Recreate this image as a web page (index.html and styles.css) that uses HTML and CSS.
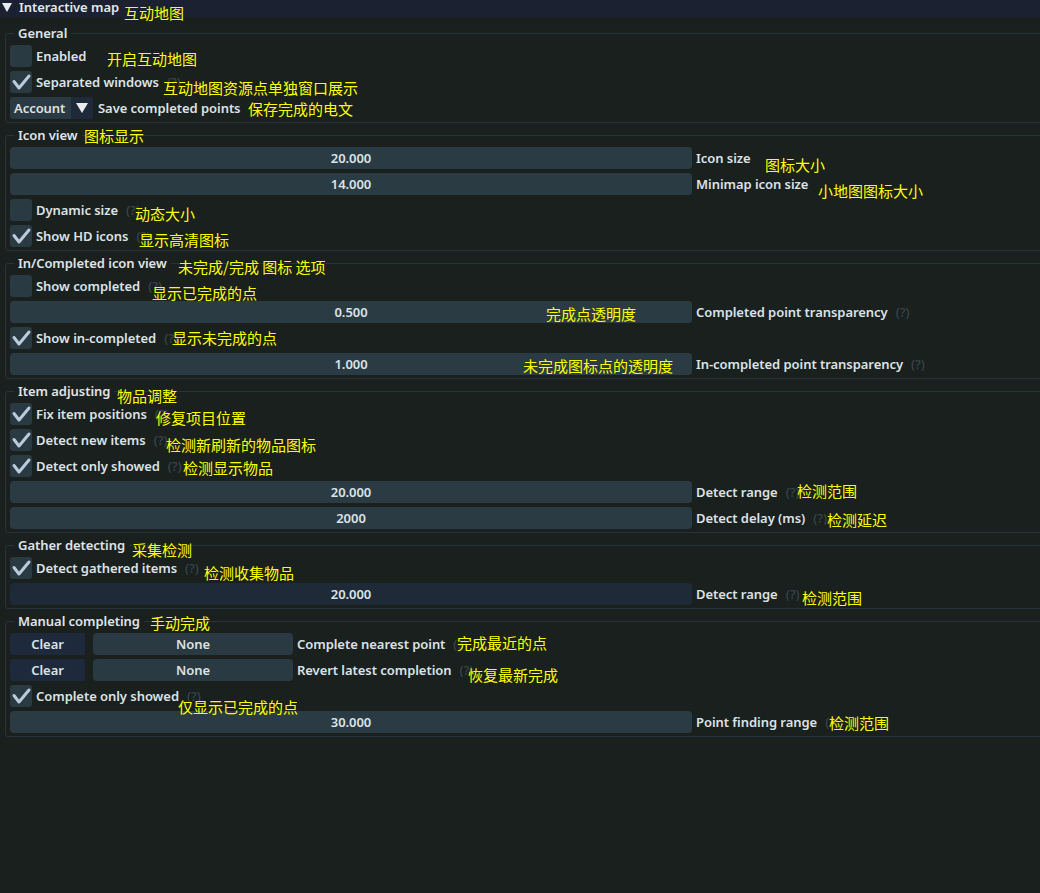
FILE: index.html
```html
<!DOCTYPE html>
<html>
<head>
<meta charset="utf-8">
<link rel="stylesheet" href="styles.css">
</head>
<body>
<div class="header"><span class="tri"></span><span class="htitle">Interactive map</span></div>
<div class="content">
  <fieldset class="group">
    <legend>General</legend>
    <div class="row"><span class="cb"></span><span class="lbl">Enabled</span></div>
    <div class="row"><span class="cb on"><svg viewBox="0 0 22 22"><path d="M4 10.5 L9 17 L19 5"/></svg></span><span class="lbl">Separated windows</span><span class="hint">(?)</span></div>
    <div class="row"><span class="combo"><span class="combo-val">Account</span><span class="combo-arrow"><span class="tri-w"></span></span></span><span class="lbl">Save completed points</span></div>
  </fieldset>

  <fieldset class="group">
    <legend>Icon view</legend>
    <div class="row"><span class="slider">20.000</span><span class="lbl">Icon size</span></div>
    <div class="row"><span class="slider">14.000</span><span class="lbl">Minimap icon size</span></div>
    <div class="row"><span class="cb"></span><span class="lbl">Dynamic size</span><span class="hint">(?)</span></div>
    <div class="row"><span class="cb on"><svg viewBox="0 0 22 22"><path d="M4 10.5 L9 17 L19 5"/></svg></span><span class="lbl">Show HD icons</span><span class="hint">(?)</span></div>
  </fieldset>

  <fieldset class="group">
    <legend>In/Completed icon view</legend>
    <div class="row"><span class="cb"></span><span class="lbl">Show completed</span><span class="hint">(?)</span></div>
    <div class="row"><span class="slider">0.500</span><span class="lbl">Completed point transparency</span><span class="hint">(?)</span></div>
    <div class="row"><span class="cb on"><svg viewBox="0 0 22 22"><path d="M4 10.5 L9 17 L19 5"/></svg></span><span class="lbl">Show in-completed</span><span class="hint">(?)</span></div>
    <div class="row"><span class="slider">1.000</span><span class="lbl">In-completed point transparency</span><span class="hint">(?)</span></div>
  </fieldset>

  <fieldset class="group">
    <legend>Item adjusting</legend>
    <div class="row"><span class="cb on"><svg viewBox="0 0 22 22"><path d="M4 10.5 L9 17 L19 5"/></svg></span><span class="lbl">Fix item positions</span><span class="hint">(?)</span></div>
    <div class="row"><span class="cb on"><svg viewBox="0 0 22 22"><path d="M4 10.5 L9 17 L19 5"/></svg></span><span class="lbl">Detect new items</span><span class="hint">(?)</span></div>
    <div class="row"><span class="cb on"><svg viewBox="0 0 22 22"><path d="M4 10.5 L9 17 L19 5"/></svg></span><span class="lbl">Detect only showed</span><span class="hint">(?)</span></div>
    <div class="row"><span class="slider">20.000</span><span class="lbl">Detect range</span><span class="hint">(?)</span></div>
    <div class="row"><span class="slider">2000</span><span class="lbl">Detect delay (ms)</span><span class="hint">(?)</span></div>
  </fieldset>

  <fieldset class="group">
    <legend>Gather detecting</legend>
    <div class="row"><span class="cb on"><svg viewBox="0 0 22 22"><path d="M4 10.5 L9 17 L19 5"/></svg></span><span class="lbl">Detect gathered items</span><span class="hint">(?)</span></div>
    <div class="row"><span class="slider hot">20.000</span><span class="lbl">Detect range</span><span class="hint">(?)</span></div>
  </fieldset>

  <fieldset class="group">
    <legend>Manual completing</legend>
    <div class="row"><span class="btn">Clear</span><span class="keybox">None</span><span class="lbl">Complete nearest point</span><span class="hint">(?)</span></div>
    <div class="row"><span class="btn">Clear</span><span class="keybox">None</span><span class="lbl">Revert latest completion</span><span class="hint">(?)</span></div>
    <div class="row"><span class="cb on"><svg viewBox="0 0 22 22"><path d="M4 10.5 L9 17 L19 5"/></svg></span><span class="lbl">Complete only showed</span><span class="hint">(?)</span></div>
    <div class="row"><span class="slider">30.000</span><span class="lbl">Point finding range</span><span class="hint">(?)</span></div>
  </fieldset>
</div>

<div class="notes">
  <span class="note n1">互动地图</span>
  <span class="note n2">开启互动地图</span>
  <span class="note n3">互动地图资源点单独窗口展示</span>
  <span class="note n4">保存完成的电文</span>
  <span class="note n5">图标显示</span>
  <span class="note n6">图标大小</span>
  <span class="note n7">小地图图标大小</span>
  <span class="note n8">动态大小</span>
  <span class="note n9">显示高清图标</span>
  <span class="note n10">未完成/完成 图标 选项</span>
  <span class="note n11">显示已完成的点</span>
  <span class="note n12">完成点透明度</span>
  <span class="note n13">显示未完成的点</span>
  <span class="note n14">未完成图标点的透明度</span>
  <span class="note n15">物品调整</span>
  <span class="note n16">修复项目位置</span>
  <span class="note n17">检测新刷新的物品图标</span>
  <span class="note n18">检测显示物品</span>
  <span class="note n19">检测范围</span>
  <span class="note n20">检测延迟</span>
  <span class="note n21">采集检测</span>
  <span class="note n22">检测收集物品</span>
  <span class="note n23">检测范围</span>
  <span class="note n24">手动完成</span>
  <span class="note n25">完成最近的点</span>
  <span class="note n26">恢复最新完成</span>
  <span class="note n27">仅显示已完成的点</span>
  <span class="note n28">检测范围</span>
</div>
</body>
</html>
```

FILE: styles.css
```css
html, body {
  margin: 0;
  padding: 0;
}
body {
  width: 1040px;
  height: 893px;
  overflow: hidden;
  background: #19201e;
  color: #dde2e6;
  font-family: "Noto Sans", "Liberation Sans", sans-serif;
  font-weight: 600;
  font-size: 13px;
  letter-spacing: -0.05px;
  position: relative;
}
.header {
  height: 17px;
  background: #1b2130;
  display: flex;
  align-items: center;
  gap: 7px;
  padding-left: 2px;
}
.tri {
  width: 0;
  height: 0;
  border-left: 5px solid transparent;
  border-right: 5px solid transparent;
  border-top: 9px solid #e8ecef;
  margin-top: -3px;
}
.htitle {
  line-height: 16px;
  margin-top: -3px;
  color: #e4e8eb;
}
.content {
  padding-top: 8px;
  display: flex;
  flex-direction: column;
  gap: 4px;
}
.group {
  margin: 0 -20px 0 5px;
  padding: 4px 0 3px 4px;
  border: 1px solid #26343a;
  border-radius: 3px;
  min-width: 0;
  display: flex;
  flex-direction: column;
  gap: 4px;
}
.group legend {
  padding: 0 4px;
  margin-left: 4px;
  line-height: 16px;
  height: 16px;
  color: #e0e4e7;
}
.row {
  height: 22px;
  display: flex;
  align-items: center;
  gap: 4px;
  white-space: nowrap;
}
.lbl {
  line-height: 16px;
}
.hint {
  color: #38444c;
  margin-left: 4px;
  font-weight: 500;
}
.cb {
  width: 22px;
  height: 22px;
  border-radius: 3px;
  background: #2a3a42;
  flex: none;
  display: flex;
}
.cb svg {
  width: 22px;
  height: 22px;
}
.cb path {
  fill: none;
  stroke: #bccadb;
  stroke-width: 3;
  stroke-linecap: round;
  stroke-linejoin: round;
}
.combo {
  width: 83px;
  height: 22px;
  display: flex;
  border-radius: 3px;
  overflow: hidden;
  flex: none;
  margin-right: 1px;
}
.combo-val {
  flex: 1;
  background: #2a3a42;
  padding-left: 4px;
  line-height: 22px;
}
.combo-arrow {
  width: 22px;
  background: #1e2a3a;
  display: flex;
  align-items: center;
  justify-content: center;
}
.tri-w {
  width: 0;
  height: 0;
  border-left: 6px solid transparent;
  border-right: 6px solid transparent;
  border-top: 10px solid #e8ecef;
}
.slider {
  width: 682px;
  height: 22px;
  border-radius: 4px;
  background: #2a3b44;
  flex: none;
  text-align: center;
  line-height: 22px;
}
.slider.hot {
  background: #1f2a38;
}
.btn {
  width: 75px;
  height: 22px;
  border-radius: 3px;
  background: #1e2a3b;
  text-align: center;
  line-height: 22px;
  flex: none;
  margin-right: 4px;
}
.keybox {
  width: 200px;
  height: 22px;
  border-radius: 4px;
  background: #2a3a42;
  text-align: center;
  line-height: 22px;
  flex: none;
}
.notes {
  position: absolute;
  left: 0;
  top: 0;
  width: 1040px;
  height: 893px;
  pointer-events: none;
}
.note {
  position: absolute;
  font-family: "Noto Sans CJK SC", "Noto Sans", sans-serif;
  font-weight: 400;
  font-size: 15px;
  line-height: 16px;
  letter-spacing: 0;
  color: #ffff00;
  white-space: nowrap;
}
.n1 { left: 124px; top: 5px; }
.n2 { left: 107px; top: 51px; }
.n3 { left: 163px; top: 80px; }
.n4 { left: 248px; top: 101px; }
.n5 { left: 84px; top: 128px; }
.n6 { left: 765px; top: 157px; }
.n7 { left: 818px; top: 183px; }
.n8 { left: 135px; top: 206px; }
.n9 { left: 139px; top: 232px; }
.n10 { left: 178px; top: 259px; }
.n11 { left: 152px; top: 285px; }
.n12 { left: 546px; top: 306px; }
.n13 { left: 172px; top: 330px; }
.n14 { left: 523px; top: 358px; }
.n15 { left: 117px; top: 388px; }
.n16 { left: 156px; top: 410px; }
.n17 { left: 166px; top: 437px; }
.n18 { left: 183px; top: 460px; }
.n19 { left: 797px; top: 483px; }
.n20 { left: 827px; top: 512px; }
.n21 { left: 132px; top: 542px; }
.n22 { left: 204px; top: 565px; }
.n23 { left: 802px; top: 590px; }
.n24 { left: 150px; top: 615px; }
.n25 { left: 457px; top: 635px; }
.n26 { left: 468px; top: 667px; }
.n27 { left: 178px; top: 699px; }
.n28 { left: 829px; top: 715px; }
```
